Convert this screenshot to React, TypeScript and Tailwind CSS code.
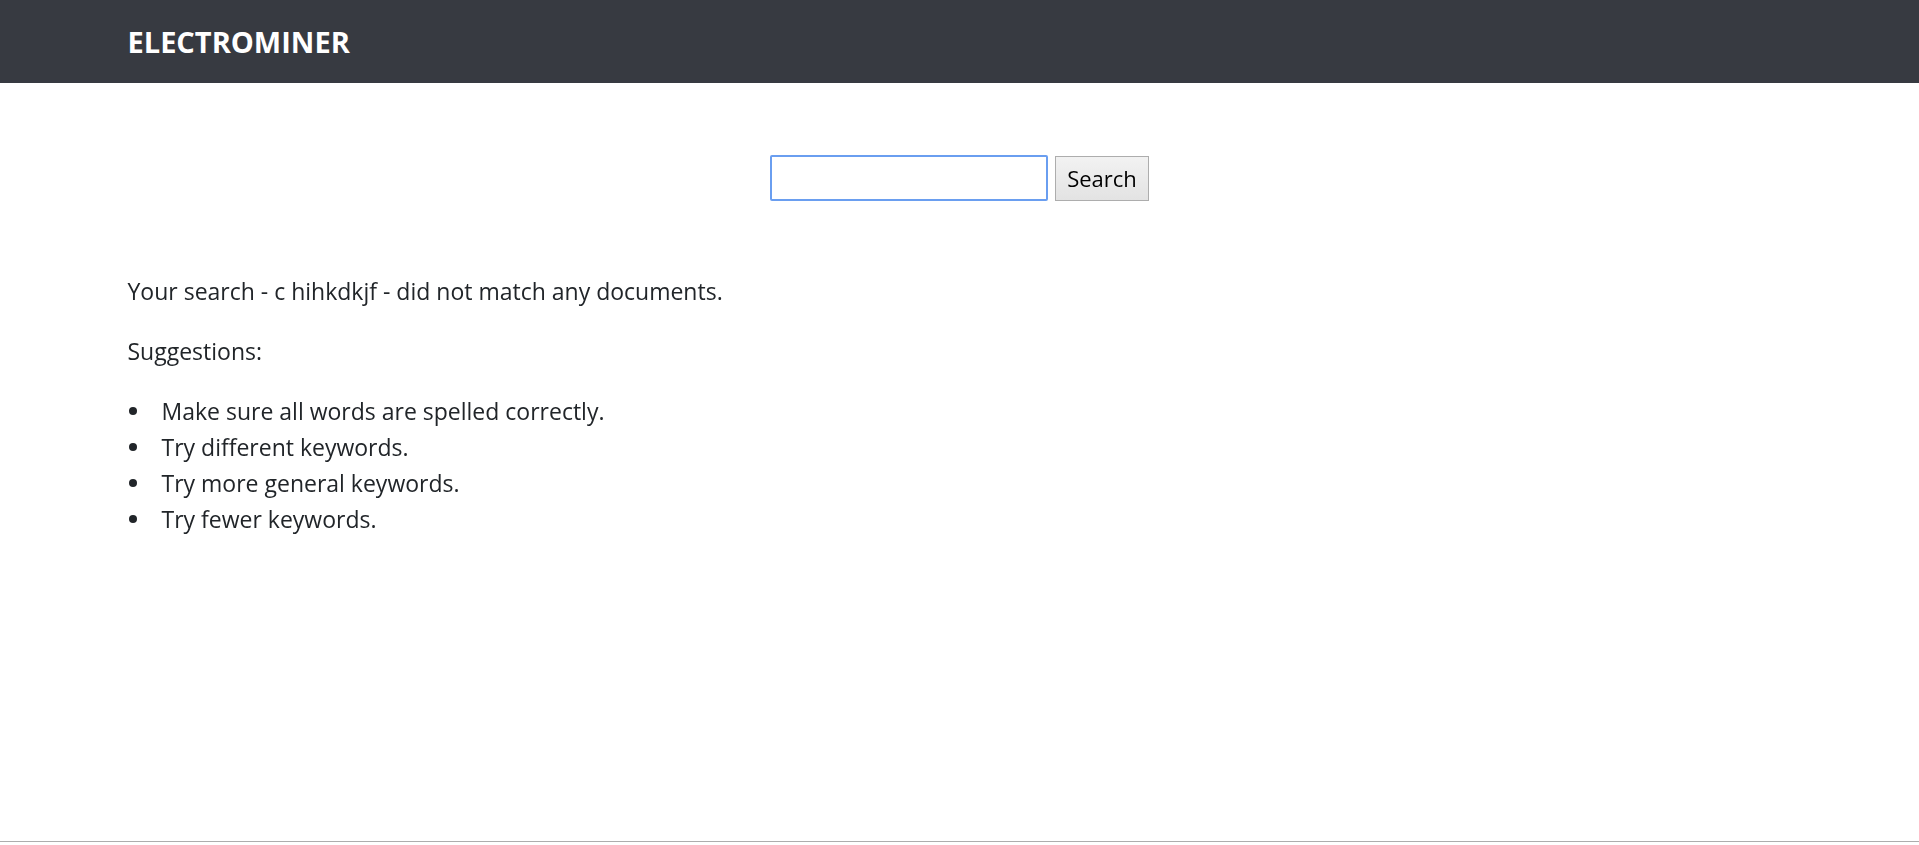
import React, { useState } from 'react';

const suggestions = [
  'Make sure all words are spelled correctly.',
  'Try different keywords.',
  'Try more general keywords.',
  'Try fewer keywords.'
];

const App: React.FC = () => {
  const [query, setQuery] = useState('');

  return (
    <div className="h-screen flex flex-col bg-white text-[#212529] font-['Open_Sans',sans-serif]">
      {/* Navbar */}
      <nav className="h-[83px] shrink-0 bg-[#373a41] flex items-center">
        <div className="w-full max-w-[1710px] mx-auto px-[23px]">
          <span className="text-white font-bold text-[29px] leading-none relative top-[1px]">ELECTROMINER</span>
        </div>
      </nav>

      {/* Main */}
      <main className="flex-1">
        <div className="w-full max-w-[1710px] mx-auto px-[23px]">
          <form
            className="flex justify-center items-center gap-[7px] pt-[72px]"
            onSubmit={(e) => e.preventDefault()}
          >
            <input
              type="text"
              autoFocus
              value={query}
              onChange={(e) => setQuery(e.target.value)}
              className="w-[278px] h-[46px] border-2 border-[#6a9ef0] rounded-[2px] px-[3px] outline-none text-[22px]"
            />
            <button
              type="submit"
              className="w-[94px] h-[45px] border border-[#adadad] bg-gradient-to-b from-[#f2f2f2] to-[#e3e3e3] text-[22px] text-black"
            >
              Search
            </button>
          </form>

          <div className="mt-[72px] text-[23px] leading-[36px]">
            <p>Your search - c hihkdkjf - did not match any documents.</p>
            <p className="mt-[24px]">Suggestions:</p>
            <ul className="mt-[24px]">
              {suggestions.map((s) => (
                <li key={s} className="flex items-center">
                  <span className="w-[8px] h-[8px] rounded-full bg-[#212529] ml-[1px] mr-[25px] shrink-0" />
                  <span>{s}</span>
                </li>
              ))}
            </ul>
          </div>
        </div>
      </main>

      {/* Footer rule */}
      <footer className="h-[4px] shrink-0 border-t border-[#adadad]" />
    </div>
  );
};

export default App;
